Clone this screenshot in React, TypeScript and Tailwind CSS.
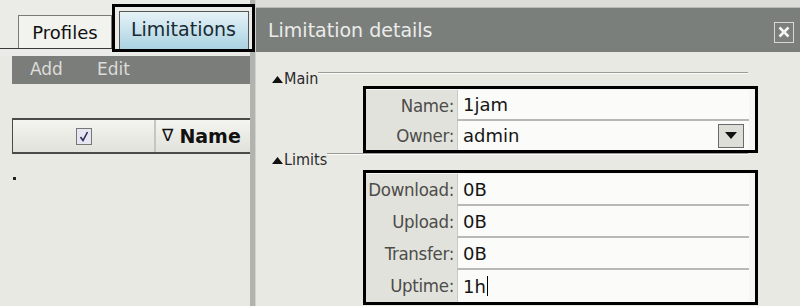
import React from "react";

const sans = { fontFamily: '"DejaVu Sans", Verdana, sans-serif' };
const cond = { fontFamily: '"DejaVu Sans Condensed", "DejaVu Sans", sans-serif' };

function Row({ label, value, last, dropdown, cursor, h }: { label: string; value: string; last?: boolean; dropdown?: boolean; cursor?: boolean; h: string }) {
  return (
    <div className={`flex ${h}`}>
      <div className="w-[91px] flex items-center justify-end pr-[3px] text-[18.5px] tracking-[-0.3px] text-[#4c4c4a] bg-[#e2e2dc]" style={cond}>
        {label}
      </div>
      <div className={`flex-1 flex items-center bg-[#fbfbf9] border-l border-[#c8c8c4] ${last ? "" : "border-b-2 border-b-[#b8b8b4]"} mr-[6px] pl-[5px] text-[18px] text-[#151515]`} style={sans}>
        <span>{value}</span>
        {cursor && <span className="inline-block w-[1px] h-[20px] bg-black ml-[1px]" />}
        {dropdown && (
          <div className="ml-auto mr-[5px] w-[26px] h-[24px] border border-[#6a6a6a] bg-[#deded8] flex items-center justify-center">
            <svg width="12" height="7" viewBox="0 0 12 7"><polygon points="0,0 12,0 6,7" fill="#111" /></svg>
          </div>
        )}
      </div>
    </div>
  );
}

function GroupHeader({ title }: { title: string }) {
  return (
    <div className="flex items-start h-[14px]">
      <div className="flex items-center text-[16px] text-[#2a2a2a] leading-[14px] pl-[16px]" style={cond}>
        <svg width="11" height="7" viewBox="0 0 11 7" className="mr-[1px]"><polygon points="0,7 11,7 5.5,0" fill="#111" /></svg>
        <span>{title}</span>
      </div>
      <div className="flex-1 mt-[0px] h-[2px] border-t border-[#9a9a96] border-b border-b-[#fafaf8] mr-[52px]" />
    </div>
  );
}

export default function App() {
  return (
    <div className="w-[800px] h-[306px] flex bg-[#e9e9e4] overflow-hidden" style={sans}>
      {/* Left panel */}
      <div className="w-[250px] shrink-0 flex flex-col relative z-10">
        <div className="h-[56px] flex items-end relative bg-[#ebebe7]">
          <div className="absolute left-0 right-0 top-[48px] h-[1px] bg-[#3a3a3a]" />
          <div className="ml-[18px] shrink-0 mb-[8px] w-[94px] h-[33px] bg-[#f2f2ee] border-l border-t border-r border-[#7a7a78] flex items-center justify-center text-[18px] text-[#111] relative z-10">
            Profiles
          </div>
          <div className="mb-[4px] w-[143px] shrink-0 h-[48px] border-[3px] border-black bg-[#ebebe7] flex items-end justify-center relative z-10">
            <div className="w-[130px] h-[38px] border-l border-t border-r border-[#555] bg-gradient-to-b from-[#e6f2f6] to-[#a9d3e2] flex items-center justify-center text-[19px] text-[#1a2a33] pb-[3px]">
              Limitations
            </div>
          </div>
        </div>
        <div className="ml-[12px] h-[28px] bg-[#7b7d7b] flex items-center text-[17px] text-[#dcdcd8] gap-[34px] pl-[18px]">
          <span>Add</span>
          <span>Edit</span>
        </div>
        <div className="ml-[12px] mt-[34px] h-[36px] border-t-2 border-b-2 border-[#4a4a48] border-l border-l-[#4a4a48] flex bg-gradient-to-b from-[#f4f4f0] to-[#e2e2dc]">
          <div className="w-[143px] flex items-center justify-center border-r-2 border-[#c6c6c0]">
            <div className="w-[16px] h-[17px] border border-[#777] bg-[#e6e6f2] flex items-center justify-center">
              <svg width="10" height="11" viewBox="0 0 10 11"><path d="M1.5 6 L4 9.5 L8.5 1" fill="none" stroke="#2c2c5a" strokeWidth="1.6" /></svg>
            </div>
          </div>
          <div className="flex-1 flex items-center pl-[6px] text-[19px] font-bold text-[#111]">
            <span className="text-[17px] font-normal mr-[6px]">∇</span>Name
          </div>
        </div>
        <div className="ml-[13px] mt-[23px] w-[3px] h-[3px] bg-[#222]" />
      </div>

      {/* Divider */}
      <div className="w-[6px] shrink-0 bg-[#b2b2ae] border-r border-[#d0d0cc]" />

      {/* Right panel */}
      <div className="flex-1 flex flex-col">
        <div className="h-[8px] bg-[#dcdcd8] border-b border-[#b8b8b4]" />
        <div className="h-[44px] bg-[#7b7f7c] flex items-center pl-[12px] pr-[6px]">
          <span className="text-[19px] text-[#ececea]">Limitation details</span>
          <div className="ml-auto mt-[4px] w-[20px] h-[21px] border border-[#d8d8d8] flex items-center justify-center">
            <svg width="12" height="12" viewBox="0 0 12 12"><path d="M1.5 1.5 L10.5 10.5 M10.5 1.5 L1.5 10.5" stroke="#f4f4f4" strokeWidth="2.6" /></svg>
          </div>
        </div>
        <div className="flex-1 flex flex-col pt-[20px]">
          <GroupHeader title="Main" />
          <div className="ml-[107px] w-[395px] border-[3px] border-black bg-[#f6f6f4] pt-[1px]">
            <Row label="Name:" value="1jam" h="h-[31px]" />
            <Row label="Owner:" value="admin" last dropdown h="h-[29px]" />
          </div>
          <GroupHeader title="Limits" />
          <div className="ml-[107px] mt-[3px] w-[395px] border-[3px] border-black bg-[#f6f6f4] pt-[1px]">
            <Row label="Download:" value="0B" h="h-[32px]" />
            <Row label="Upload:" value="0B" h="h-[32px]" />
            <Row label="Transfer:" value="0B" h="h-[32px]" />
            <Row label="Uptime:" value="1h" last cursor h="h-[32px]" />
          </div>
        </div>
      </div>
    </div>
  );
}
